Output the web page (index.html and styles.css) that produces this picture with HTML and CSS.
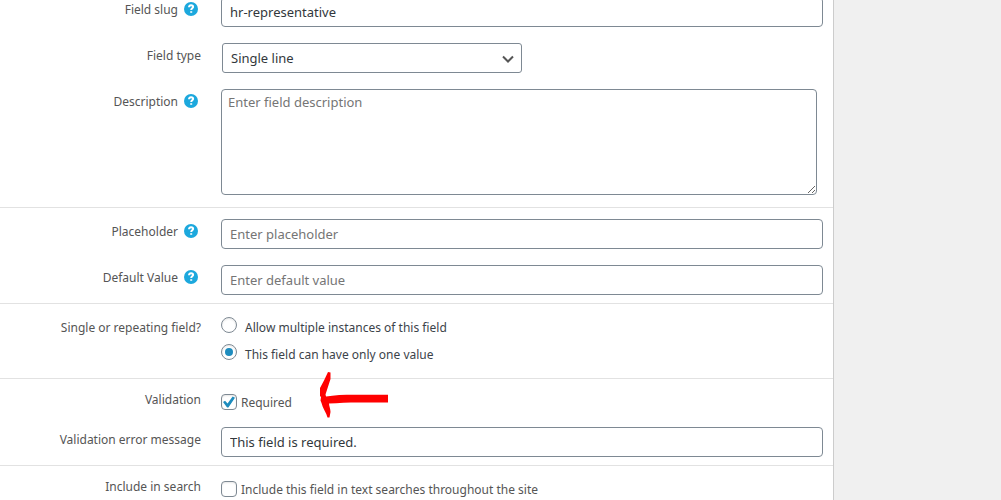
FILE: index.html
```
<!DOCTYPE html>
<html lang="en">
<head>
<meta charset="utf-8">
<meta name="viewport" content="width=device-width, initial-scale=1">
<title>Edit field</title>
<link rel="stylesheet" href="styles.css">
</head>
<body>
<form class="panel">
  <section class="group group-first">
    <div class="row">
      <div class="label"><label for="slug">Field slug</label><button type="button" class="help" aria-label="Help: field slug"><svg viewBox="0 0 14 14"><path d="M5 5.3C5.1 3.9 6 3.2 7.1 3.2c1.200 0 2 .7 2 1.700C9.100 6.300 7.200 6.400 7.200 8M7.200 9.300v1.500"/></svg></button></div>
      <input class="text" id="slug" type="text" value="hr-representative">
    </div>
    <div class="row">
      <div class="label"><label for="type">Field type</label></div>
      <div class="select-wrap">
        <select class="select" id="type"><option>Single line</option></select>
        <svg class="chevron" viewBox="0 0 12 8"><path d="M1 1.500l5 5 5-5"/></svg>
      </div>
    </div>
    <div class="row">
      <div class="label"><label for="desc">Description</label><button type="button" class="help" aria-label="Help: description"><svg viewBox="0 0 14 14"><path d="M5 5.3C5.1 3.9 6 3.2 7.1 3.2c1.200 0 2 .7 2 1.700C9.100 6.300 7.200 6.400 7.200 8M7.200 9.300v1.500"/></svg></button></div>
      <textarea class="area" id="desc" placeholder="Enter field description"></textarea>
    </div>
  </section>

  <section class="group">
    <div class="row">
      <div class="label"><label for="ph">Placeholder</label><button type="button" class="help" aria-label="Help: placeholder"><svg viewBox="0 0 14 14"><path d="M5 5.3C5.1 3.9 6 3.2 7.1 3.2c1.200 0 2 .7 2 1.700C9.100 6.300 7.200 6.400 7.200 8M7.200 9.300v1.500"/></svg></button></div>
      <input class="text" id="ph" type="text" placeholder="Enter placeholder">
    </div>
    <div class="row">
      <div class="label"><label for="def">Default Value</label><button type="button" class="help" aria-label="Help: default value"><svg viewBox="0 0 14 14"><path d="M5 5.3C5.1 3.9 6 3.2 7.1 3.2c1.200 0 2 .7 2 1.700C9.100 6.300 7.200 6.400 7.200 8M7.200 9.300v1.500"/></svg></button></div>
      <input class="text" id="def" type="text" placeholder="Enter default value">
    </div>
  </section>

  <section class="group group-radios">
    <div class="row" role="radiogroup" aria-labelledby="repeat">
      <div class="label" id="repeat">Single or repeating field?</div>
      <div class="radios">
        <label class="radio-line"><input class="radio" type="radio" name="repeat">Allow multiple instances of this field</label>
        <label class="radio-line"><input class="radio" type="radio" name="repeat" checked>This field can have only one value</label>
      </div>
    </div>
  </section>

  <section class="group group-checks">
    <div class="row">
      <div class="label">Validation</div>
      <div class="check-cell">
        <label class="check-line"><input class="check" type="checkbox" checked>Required</label>
        <svg class="arrow" viewBox="0 0 70 48"><path d="M8 0L10.500 0.500V7L5.500 22.500L6 24.500C14 23 24 22.700 34 22.700H68V30.500H44C32 30.300 20 30.800 9 31.500C9 34 10.500 37 10.500 40L9.500 45.500H7.500C6.500 41 2.500 36 1.500 31L0.500 28.500L1 25L0 24V16L4 8.500Z"/></svg>
      </div>
    </div>
    <div class="row">
      <div class="label"><label for="err">Validation error message</label></div>
      <input class="text" id="err" type="text" value="This field is required.">
    </div>
  </section>

  <section class="group group-checks">
    <div class="row">
      <div class="label">Include in search</div>
      <div class="check-cell">
        <label class="check-line"><input class="check" type="checkbox">Include this field in text searches throughout the site</label>
      </div>
    </div>
  </section>
</form>
</body>
</html>
```
FILE: styles.css
```
* {
  box-sizing: border-box;
}

body {
  display: flex;
  min-height: 100vh;
  margin: 0;
  padding-right: 167px;
  overflow: hidden;
  background: #f0f0f0;
  color: #555;
  font: 13px/26px "Segoe UI", "Noto Sans", sans-serif;
}

.panel {
  flex: 1;
  min-width: 0;
  border-right: 1px solid #ccc;
  background: #fff;
}

.group {
  display: flex;
  flex-direction: column;
  gap: 16px;
  padding: 11px 10px 8px 0;
  border-bottom: 1px solid #e2e2e2;
}

/* The form is scrolled: the first field starts just above the window. */
.group-first {
  margin-top: -3px;
  padding-top: 0;
  padding-bottom: 12px;
}

.group-radios {
  padding-bottom: 10px;
}

.group-checks {
  gap: 10px;
  padding-top: 8px;
}

.row {
  display: grid;
  grid-template-columns: 201px minmax(0, 1fr);
  column-gap: 20px;
  align-items: start;
}

.label {
  display: flex;
  justify-content: flex-end;
  align-items: flex-start;
  height: 26px;
  font-size: 12px;
  white-space: nowrap;
}

.help {
  display: flex;
  width: 14px;
  height: 14px;
  margin: 5px 3px 0 6px;
  padding: 0;
  border: 0;
  border-radius: 50%;
  background: #1ca8dd;
}

.help svg {
  width: 14px;
  height: 14px;
  fill: none;
  stroke: #fff;
  stroke-width: 2;
}

.text,
.select,
.area {
  display: block;
  width: 100%;
  border: 1px solid #7e8993;
  border-radius: 4px;
  background: #fff;
  color: #32373c;
  font: 13px/28px "Segoe UI", "Noto Sans", sans-serif;
}

.text {
  height: 30px;
  padding: 0 8px;
}

.area {
  width: calc(100% - 6px);
  height: 106px;
  padding: 2px 6px;
  line-height: 20px;
  resize: vertical;
}

.text::placeholder,
.area::placeholder {
  color: #757575;
}

.select-wrap {
  position: relative;
  width: 300px;
  max-width: 100%;
  margin-left: 1px;
}

.select {
  height: 30px;
  padding: 0 24px 0 8px;
  border-radius: 3px;
  appearance: none;
}

.chevron {
  position: absolute;
  top: 12px;
  right: 8px;
  width: 12px;
  height: 8px;
  fill: none;
  stroke: #555;
  stroke-width: 2;
  pointer-events: none;
}

.radios {
  display: flex;
  flex-direction: column;
  gap: 1px;
}

.radio-line {
  display: flex;
  align-items: flex-start;
  gap: 8px;
  color: #3c434a;
  font-size: 12px;
}

.radio,
.check {
  display: grid;
  place-items: center;
  flex: none;
  width: 16px;
  height: 16px;
  margin: 0;
  border: 1px solid #7e8993;
  background: #fff;
  box-shadow: inset 0 1px 2px rgba(0, 0, 0, 0.1);
  appearance: none;
}

.radio {
  margin-top: 2px;
  border-radius: 50%;
}

.radio:checked::before {
  width: 8px;
  height: 8px;
  border-radius: 50%;
  background: #1e8cbe;
  content: "";
}

.check {
  margin-top: 7px;
  border-radius: 4px;
}

.check:checked::before {
  width: 12px;
  height: 12px;
  background: #1e8cbe;
  clip-path: polygon(0 50%, 17% 40%, 38% 62%, 80% 4%, 100% 14%, 45% 96%, 34% 96%);
  content: "";
}

.check-cell {
  position: relative;
}

.check-line {
  display: flex;
  align-items: flex-start;
  gap: 4px;
  height: 30px;
  font-size: 12px;
  line-height: 32px;
}

.arrow {
  position: absolute;
  top: -15px;
  left: 99px;
  width: 70px;
  height: 48px;
  fill: #f00;
}
```
